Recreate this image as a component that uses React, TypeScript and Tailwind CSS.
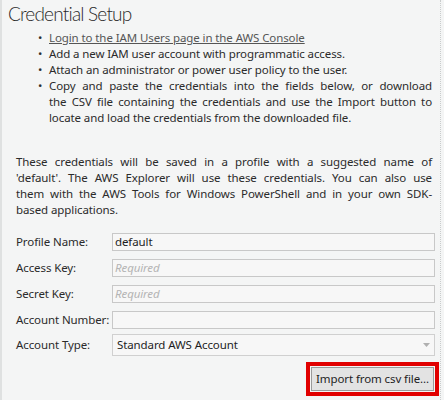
import React from "react";

const font = "font-['Noto_Sans','Open_Sans',sans-serif]";

function Row({ label, children }: { label: string; children: React.ReactNode }) {
  return (
    <div className="flex items-center h-[26px]">
      <div className="w-[96px] shrink-0 whitespace-nowrap text-[#2b2b2b]">{label}</div>
      {children}
    </div>
  );
}

function Input({ value, placeholder }: { value?: string; placeholder?: string }) {
  return (
    <div className="flex-1 h-[18px] border border-[#c8c8c8] bg-[#f7f7f7] flex items-center px-[2px] leading-none">
      {value ? (
        <span className="text-[#1e1e1e]">{value}</span>
      ) : placeholder ? (
        <span className="italic text-[#b4b4b4]">{placeholder}</span>
      ) : null}
    </div>
  );
}

function JLine({ children }: { children: React.ReactNode }) {
  return <div className="text-justify [text-align-last:justify]">{children}</div>;
}

export default function App() {
  return (
    <div
      className={`w-[444px] h-[400px] overflow-hidden bg-[#f4f5f5] border-l-2 border-[#dfe1e1] ${font} text-[#2b2b2b] text-[11.5px] tracking-[-0.1px]`}
    >
      <div className="h-[400px] border-r border-dotted border-[#c9cccc] mr-[3px] pl-[6px] pr-[5px]">
        <div className="h-[30px] pt-[1px] text-[19px] leading-[26px] text-[#2a2a2a] font-['Lato',sans-serif] font-light tracking-[-0.8px]">
          Credential Setup
        </div>
        <ul className="leading-[16px] pl-[30px] pr-[3px]">
          <li className="flex">
            <span className="w-[11px] shrink-0">•</span>
            <span className="underline text-[#555]">Login to the IAM Users page in the AWS Console</span>
          </li>
          <li className="flex">
            <span className="w-[11px] shrink-0">•</span>
            <span>Add a new IAM user account with programmatic access.</span>
          </li>
          <li className="flex">
            <span className="w-[11px] shrink-0">•</span>
            <span>Attach an administrator or power user policy to the user.</span>
          </li>
          <li className="flex">
            <span className="w-[11px] shrink-0">•</span>
            <div className="flex-1">
              <JLine>Copy and paste the credentials into the fields below, or download</JLine>
              <JLine>the CSV file containing the credentials and use the Import button to</JLine>
              <div>locate and load the credentials from the downloaded file.</div>
            </div>
          </li>
        </ul>
        <div className="mt-[28px] pl-[8px] pr-[3px] leading-[16px]">
          <JLine>These credentials will be saved in a profile with a suggested name of</JLine>
          <JLine>'default'. The AWS Explorer will use these credentials. You can also use</JLine>
          <JLine>them with the AWS Tools for Windows PowerShell and in your own SDK-</JLine>
          <div>based applications.</div>
        </div>
        <div className="mt-[11px] pl-[8px]">
          <Row label="Profile Name:">
            <Input value="default" />
          </Row>
          <Row label="Access Key:">
            <Input placeholder="Required" />
          </Row>
          <Row label="Secret Key:">
            <Input placeholder="Required" />
          </Row>
          <Row label="Account Number:">
            <Input />
          </Row>
          <div className="flex items-center h-[24px]">
            <div className="w-[96px] shrink-0 whitespace-nowrap text-[#2b2b2b]">Account Type:</div>
            <div className="flex-1 h-[22px] border border-[#d0d0d0] bg-[#f7f7f7] flex items-center justify-between px-[4px]">
              <span className="text-[#1e1e1e]">Standard AWS Account</span>
              <svg width="7" height="5" viewBox="0 0 7 5">
                <path d="M0 0h7L3.5 4z" fill="#b0b0b0" />
              </svg>
            </div>
          </div>
          <div className="flex justify-end mt-[5px] mr-[-4px]">
            <div className="border-[4px] border-[#e10000] p-[1px]">
              <div className="h-[24px] px-[4px] flex items-center border border-[#9a9a9a] bg-[#e3e3e3] text-[#1e1e1e]">
                Import from csv file...
              </div>
            </div>
          </div>
        </div>
      </div>
    </div>
  );
}
